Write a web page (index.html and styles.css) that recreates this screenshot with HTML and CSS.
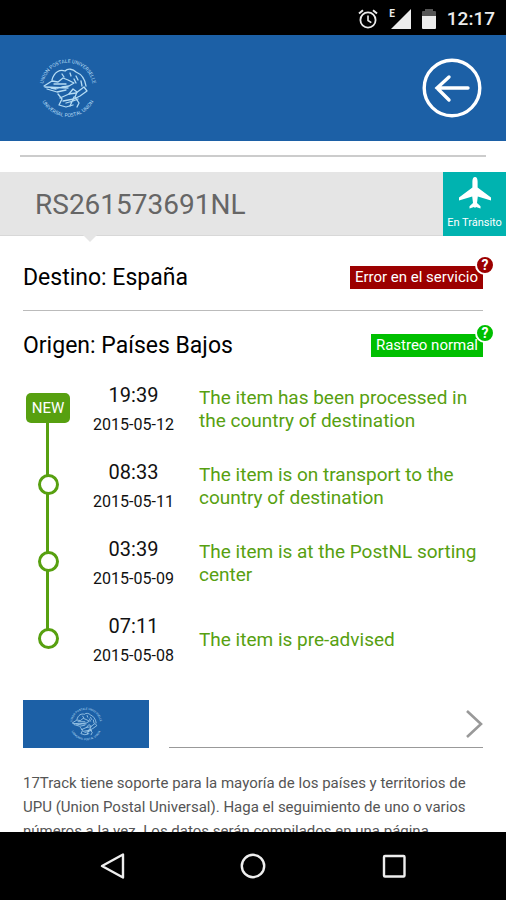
FILE: index.html
```
<!DOCTYPE html>
<html lang="es">
<head>
    <meta charset="utf-8">
    <meta name="viewport" content="width=device-width, initial-scale=1">
    <title>RS261573691NL</title>
    <link rel="stylesheet" href="styles.css">
</head>
<body>
    <!-- Shared shapes -->
    <svg class="defs" width="0" height="0" aria-hidden="true">
        <symbol id="upu" viewBox="0 0 60 60">
            <path id="arcTop" d="M5.4 34.3 A25 25 0 1 1 54.6 34.3" fill="none"/>
            <path id="arcBottom" d="M1.3 34 A29 29 0 0 0 58.7 34" fill="none"/>
            <text class="seal-text"><textPath href="#arcTop" startOffset="50%">UNION POSTALE UNIVERSELLE</textPath></text>
            <text class="seal-text"><textPath href="#arcBottom" startOffset="50%">UNIVERSAL POSTAL UNION</textPath></text>
            <g fill="none" stroke="#b5dcf4" stroke-width="1.3" stroke-linecap="round" stroke-linejoin="round">
                <path d="M14 22 C16 14 22 11 27 13 C30 10 35 11 38 14 C43 16 47 21 48 28"/>
                <path d="M6 28 L14 23 L20 24 L25 20 L30 22 L36 25 L31 28 L24 29 L18 31 L13 30 M7 29 L30 30 M9 31 L19 34 L28 32 M16 26 L28 26"/>
                <path d="M20 36 L24 41 L21 47 L28 49 L35 47 M22 40 L31 36 L38 35 L46 29 L49 33 L42 38 L36 41 L25 43"/>
                <path d="M31 36 L35 31 L39 34 L37 39 L41 45 L39 49 M28 45 L35 43 L40 41 M32 48 L36 39"/>
                <path d="M24 16 L26 19 M32 15 L33 18 M38 18 L40 22 M43 23 L44 28 M36 21 L38 25"/>
            </g>
        </symbol>
    </svg>

    <div class="status-bar">
        <svg width="20" height="20" viewBox="0 0 20 20" fill="none" stroke="#ececec">
            <circle cx="10" cy="11" r="7.6" stroke-width="1.8"/>
            <path d="M10 6.5v5l3.3 2.1" stroke-width="1.6"/>
            <path d="M1 4.6l4-3.3M19 4.6l-4-3.3" stroke-width="2"/>
        </svg>
        <div class="signal">
            <span>E</span>
            <svg width="20" height="20" viewBox="0 0 20 20"><path d="M20 0v20H0z" fill="#ececec"/></svg>
        </div>
        <svg width="14" height="20" viewBox="0 0 14 20">
            <path d="M0 7V3q0-1 1-1h2V0h8v2h2q1 0 1 1v4z" fill="#555"/>
            <path d="M0 7h14v12q0 1-1 1H1q-1 0-1-1z" fill="#ececec"/>
        </svg>
        <time>12:17</time>
    </div>

    <main>
        <header>
            <svg class="seal" role="img" aria-label="UPU"><use href="#upu"/></svg>
            <button class="back" aria-label="Volver">
                <svg width="60" height="60" viewBox="0 0 60 60" fill="none" stroke="#fff">
                    <circle cx="30" cy="30" r="27.800" stroke-width="3.4"/>
                    <path d="M46 30H15M27 19L15 30l12 12" stroke-width="3.4" stroke-linecap="round" stroke-linejoin="miter"/>
                </svg>
            </button>
        </header>
        <hr>

        <div class="tracking">
            <h1>RS261573691NL</h1>
            <div class="state">
                <svg width="34" height="34" viewBox="0 0 34 34" fill="#fff">
                    <path d="M17 1c1.8 0 2.6 2 2.6 4.500v6L33 21.500v3L19.800 20.500l-.8 6.500 3.500 3.200v2.300L18 31l-1 1-1-1-4.500 1.500v-2.300l3.500-3.200-.8-6.500L1 24.500v-3l13.400-10v-6C14.400 3 15.200 1 17 1z"/>
                </svg>
                <span>En Tránsito</span>
            </div>
        </div>

        <section class="country">
            <h2>Destino: España</h2>
            <div class="badge error">Error en el servicio<button class="help" aria-label="Ayuda">?</button></div>
        </section>
        <section class="country">
            <h2>Origen: Países Bajos</h2>
            <div class="badge normal">Rastreo normal<button class="help" aria-label="Ayuda">?</button></div>
        </section>

        <ol class="timeline">
            <li>
                <div class="mark"><span class="new">NEW</span></div>
                <div class="when"><time>19:39</time><span>2015-05-12</span></div>
                <p>The item has been processed in the country of destination</p>
            </li>
            <li>
                <div class="mark"><span class="dot"></span></div>
                <div class="when"><time>08:33</time><span>2015-05-11</span></div>
                <p>The item is on transport to the country of destination</p>
            </li>
            <li>
                <div class="mark"><span class="dot"></span></div>
                <div class="when"><time>03:39</time><span>2015-05-09</span></div>
                <p>The item is at the PostNL sorting center</p>
            </li>
            <li>
                <div class="mark"><span class="dot"></span></div>
                <div class="when"><time>07:11</time><span>2015-05-08</span></div>
                <p>The item is pre-advised</p>
            </li>
        </ol>

        <a class="carrier" href="#" aria-label="UPU">
            <span class="carrier-logo"><svg class="seal small"><use href="#upu"/></svg></span>
            <span class="carrier-link">
                <svg width="17" height="28" viewBox="0 0 17 28" fill="none" stroke="#999" stroke-width="2.600"><path d="M1 1l14 13L1 27"/></svg>
            </span>
        </a>

        <p class="about">17Track tiene soporte para la mayoría de los países y territorios de UPU (Union Postal Universal). Haga el seguimiento de uno o varios números a la vez. Los datos serán compilados en una página</p>
    </main>

    <nav>
        <button aria-label="Atrás">
            <svg width="28" height="28" viewBox="0 0 28 28"><path d="M25 2.500v23L4 14z"/></svg>
        </button>
        <button aria-label="Inicio">
            <svg width="28" height="28" viewBox="0 0 28 28"><circle cx="14" cy="14" r="11.200"/></svg>
        </button>
        <button aria-label="Recientes">
            <svg width="28" height="28" viewBox="0 0 28 28"><rect x="4" y="4" width="20.500" height="20.500" rx="1"/></svg>
        </button>
    </nav>
</body>
</html>
```

FILE: styles.css
```
* {
    box-sizing: border-box;
}
body {
    margin: 0;
    height: 100vh;
    display: flex;
    flex-direction: column;
    font-family: Roboto, "Liberation Sans", sans-serif;
    background: #fff;
    color: #111;
}
h1, h2, p, ol {
    margin: 0;
    padding: 0;
    font-weight: normal;
}
button {
    padding: 0;
    border: 0;
    background: none;
    font-family: inherit;
}
svg {
    display: block;
}
.defs {
    position: absolute;
}

/* Status bar */
.status-bar {
    flex: none;
    height: 35px;
    padding: 2px 11px 0;
    display: flex;
    align-items: center;
    justify-content: flex-end;
    gap: 11px;
    background: #000;
    color: #ececec;
}
.status-bar time {
    font-size: 19px;
    font-weight: 500;
}
.signal {
    display: flex;
    align-items: flex-start;
    font-size: 10px;
    line-height: 10px;
    font-weight: bold;
}
.signal svg {
    margin-left: -4px;
}

main {
    flex: 1;
    min-height: 0;
    overflow: hidden;
}
header {
    height: 106px;
    padding: 0 24px 0 38px;
    display: flex;
    align-items: center;
    justify-content: space-between;
    background: #1c60a6;
}
.seal {
    width: 60px;
    height: 60px;
}
.seal.small {
    width: 34px;
    height: 34px;
}
.seal-text {
    font-size: 5px;
    fill: #b5dcf4;
    text-anchor: middle;
}
hr {
    margin: 14px 20px 15px;
    border: 0;
    border-top: 2px solid #ccc;
}

/* Tracking number */
.tracking {
    position: relative;
    display: flex;
    height: 64px;
    background: #e5e5e5;
    border-bottom: 1px solid #d8d8d8;
}
.tracking::after {
    content: "";
    position: absolute;
    left: 83px;
    top: 63px;
    border: 7px solid transparent;
    border-top-color: #e5e5e5;
    border-bottom: 0;
}
.tracking h1 {
    flex: 1;
    padding-left: 35px;
    font-size: 28px;
    line-height: 66px;
    color: #666;
}
.state {
    width: 63px;
    height: 64px;
    padding-top: 4px;
    display: flex;
    flex-direction: column;
    align-items: center;
    gap: 6px;
    background: #00b3b0;
    color: #fff;
    font-size: 11px;
    line-height: 14px;
}

/* Countries */
.country {
    display: flex;
    align-items: center;
    justify-content: space-between;
    height: 68px;
    margin: 0 23px;
}
.tracking + .country {
    height: 75px;
    padding-top: 8px;
    border-bottom: 1px solid #bbb;
}
.country h2 {
    padding-top: 2px;
    font-size: 23px;
    line-height: 28px;
    color: #000;
}
.badge {
    position: relative;
    padding: 0 5px;
    font-size: 15px;
    line-height: 23px;
    color: #fff;
}
.error, .error .help {
    background: #9c0000;
}
.normal, .normal .help {
    background: #00bf00;
}
.help {
    position: absolute;
    top: -11px;
    right: -12px;
    width: 20px;
    height: 20px;
    border: 2px solid #fff;
    border-radius: 50%;
    font-size: 14px;
    line-height: 16px;
    font-weight: bold;
    color: #fff;
}

/* Timeline */
.timeline {
    margin: -10px 23px 0;
    list-style: none;
}
.timeline li {
    position: relative;
    display: grid;
    grid-template-columns: 50px 121px 1fr;
    align-items: center;
    height: 77px;
}
.timeline li:not(:last-child)::before {
    content: "";
    position: absolute;
    left: 23px;
    top: 50%;
    width: 3px;
    height: 100%;
    background: #57a010;
}
.mark {
    position: relative;
    display: flex;
    justify-content: center;
}
.new {
    padding: 0 6px;
    border-radius: 5px;
    background: #57a010;
    color: #fff;
    font-size: 15px;
    line-height: 30px;
}
.dot {
    width: 21px;
    height: 21px;
    border: 3px solid #57a010;
    border-radius: 50%;
    background: #fff;
}
.when {
    padding-top: 2px;
    text-align: center;
    color: #111;
}
.when time {
    display: block;
    font-size: 20px;
    line-height: 32px;
}
.when span {
    display: block;
    font-size: 16px;
    line-height: 28px;
}
.timeline p {
    padding: 2px 0 0 5px;
    font-size: 19px;
    line-height: 23px;
    color: #57a010;
}

/* Carrier */
.carrier {
    display: flex;
    gap: 20px;
    height: 48px;
    margin: 23px 23px 0;
}
.carrier-logo {
    width: 126px;
    display: flex;
    align-items: center;
    justify-content: center;
    background: #1c60a6;
}
.carrier-link {
    flex: 1;
    display: flex;
    align-items: center;
    justify-content: flex-end;
    border-bottom: 1px solid #999;
}
.about {
    margin: 23px 20px 0 23px;
    font-size: 15px;
    line-height: 24px;
    color: #555;
}

/* Navigation buttons */
nav {
    flex: none;
    height: 68px;
    padding: 0 98px;
    display: flex;
    align-items: center;
    justify-content: space-between;
    background: #000;
}
nav svg {
    fill: none;
    stroke: #eee;
    stroke-width: 2.4;
    stroke-linejoin: round;
}
```
